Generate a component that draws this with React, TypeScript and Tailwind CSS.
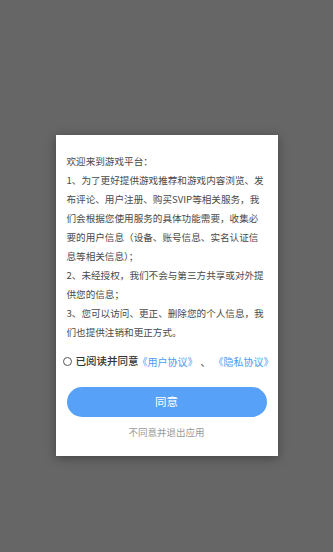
import React from "react";

const lines = [
  "欢迎来到游戏平台：",
  "1、为了更好提供游戏推荐和游戏内容浏览、发",
  "布评论、用户注册、购买SVIP等相关服务，我",
  "们会根据您使用服务的具体功能需要，收集必",
  "要的用户信息（设备、账号信息、实名认证信",
  "息等相关信息）；",
  "2、未经授权，我们不会与第三方共享或对外提",
  "供您的信息；",
  "3、您可以访问、更正、删除您的个人信息，我",
  "们也提供注销和更正方式。",
];

export default function App() {
  return (
    <div
      className="min-h-screen bg-[#666666] flex justify-center items-center pt-[39px]"
      style={{ fontFamily: '"Noto Sans CJK SC", "Noto Sans", sans-serif' }}
    >
      <div className="w-[222px] h-[321px] bg-white shadow-[0_2px_10px_rgba(0,0,0,0.35)] flex flex-col pt-[17px] pb-[17px]">
        {/* 协议正文 */}
        <div className="px-[11px] text-[9.6px] leading-[19px] text-[#4a4a4a]">
          {lines.map((l, i) => (
            <div key={i} className="whitespace-nowrap">
              {l}
            </div>
          ))}
        </div>

        <div className="mt-[11px] h-[16px] shrink-0 flex items-center pl-[7px] whitespace-nowrap">
          <span className="w-[9px] h-[9px] rounded-full border border-[#555555] shrink-0" />
          <span className="ml-[4px] text-[10.5px] font-medium text-[#333333]">已阅读并同意</span>
          <span className="ml-[-1px] text-[10px] text-[#4a9af4]">《用户协议》</span>
          <span className="px-[3px] text-[10px] text-[#333333]">、</span>
          <span className="text-[10px] text-[#4a9af4]">《隐私协议》</span>
        </div>

        <button className="mt-[18px] mx-[11px] h-[30px] shrink-0 rounded-full bg-[#57a1f8] text-white text-[11.5px]">
          同意
        </button>
        <div className="mt-[8px] shrink-0 text-center text-[9.5px] leading-[14px] text-[#9a9a9a]">
          不同意并退出应用
        </div>
      </div>
    </div>
  );
}
